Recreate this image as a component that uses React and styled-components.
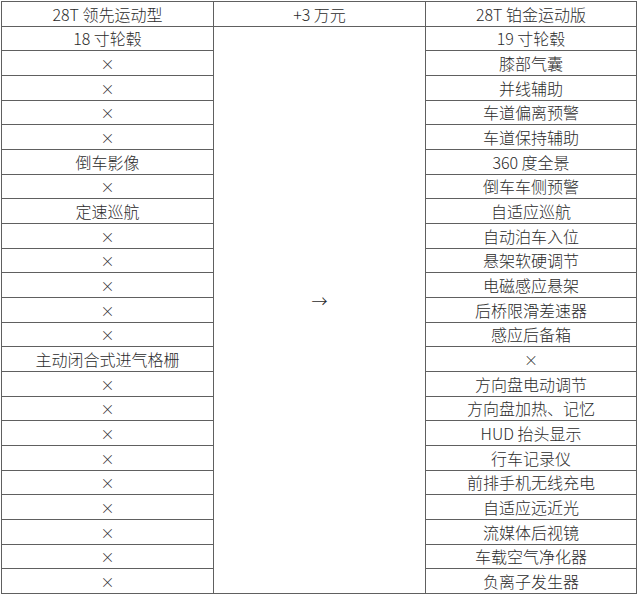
import styled, { createGlobalStyle } from "styled-components";

const GlobalStyle = createGlobalStyle`
  html, body {
    margin: 0;
    padding: 0;
    background: #ffffff;
  }
  body {
    font-family: "Noto Sans CJK SC", "Noto Sans", sans-serif;
  }
`;

const rows = [
  ["18 寸轮毂", "19 寸轮毂"],
  ["×", "膝部气囊"],
  ["×", "并线辅助"],
  ["×", "车道偏离预警"],
  ["×", "车道保持辅助"],
  ["倒车影像", "360 度全景"],
  ["×", "倒车车侧预警"],
  ["定速巡航", "自适应巡航"],
  ["×", "自动泊车入位"],
  ["×", "悬架软硬调节"],
  ["×", "电磁感应悬架"],
  ["×", "后桥限滑差速器"],
  ["×", "感应后备箱"],
  ["主动闭合式进气格栅", "×"],
  ["×", "方向盘电动调节"],
  ["×", "方向盘加热、记忆"],
  ["×", "HUD 抬头显示"],
  ["×", "行车记录仪"],
  ["×", "前排手机无线充电"],
  ["×", "自适应远近光"],
  ["×", "流媒体后视镜"],
  ["×", "车载空气净化器"],
  ["×", "负离子发生器"],
];

export default function App() {
  return (
    <>
      <GlobalStyle />
      <Page>
        <Table>
          <Cell>28T 领先运动型</Cell>
          <Cell>+3 万元</Cell>
          <Cell>28T 铂金运动版</Cell>
          {rows.map(([left, right], i) => (
            <Row key={i} left={left} right={right} first={i === 0} />
          ))}
        </Table>
      </Page>
    </>
  );
}

const Row = ({ left, right, first }) => (
  <>
    <Cell $mark={left === "×"}>{left}</Cell>
    {first && (
      <MergedCell>
        <Arrow>→</Arrow>
      </MergedCell>
    )}
    <Cell $mark={right === "×"}>{right}</Cell>
  </>
);

const Page = styled.div`
  padding: 1px 0 0 1px;
`;

const Table = styled.div`
  display: grid;
  grid-template-columns: 212px 212px 211px;
  grid-template-rows: repeat(24, 1fr);
  height: 593px;
  width: 636px;
  box-sizing: border-box;
  border-top: 1px solid #606060;
  border-left: 1px solid #606060;
`;

const Cell = styled.div`
  display: flex;
  align-items: center;
  justify-content: center;
  border-right: 1px solid #606060;
  border-bottom: 1px solid #606060;
  font-size: ${(p) => (p.$mark ? "14px" : "16px")};
  font-weight: 300;
  color: #2b2b2b;
  line-height: 1;
  white-space: nowrap;
`;

const MergedCell = styled(Cell)`
  grid-column: 2;
  grid-row: 2 / 25;
  padding-bottom: 20px;
`;

const Arrow = styled.span`
  font-size: 16px;
`;
